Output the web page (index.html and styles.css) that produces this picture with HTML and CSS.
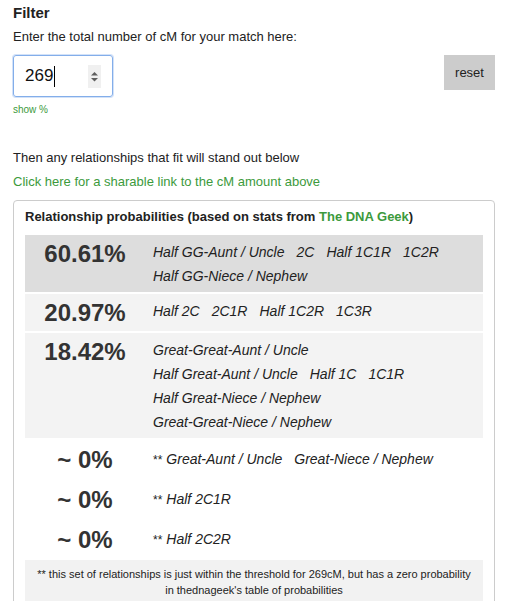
FILE: index.html
```html
<!DOCTYPE html>
<html lang="en">
<head>
  <meta charset="UTF-8">
  <meta name="viewport" content="width=device-width, initial-scale=1.0">
  <title>cM Filter</title>
  <link rel="stylesheet" href="styles.css">
</head>
<body>
<div class="page">
    <h2 class="filter-title">Filter</h2>
    <p class="intro">Enter the total number of cM for your match here:</p>

    <div class="input-row">
        <div class="cm-input">
            <span class="cm-value">269</span><span class="caret"></span>
            <svg class="spinner" width="13" height="23" viewBox="0 0 13 23">
                <rect width="13" height="23" fill="#f0f0f0"/>
                <path d="M3 10.5 L6.5 7 L10 10.5 Z" fill="#5f5f5f"/>
                <path d="M3 13 L6.5 16.5 L10 13 Z" fill="#5f5f5f"/>
            </svg>
        </div>
        <button class="reset">reset</button>
    </div>
    <a class="show-pct" href="#">show %</a>

    <p class="hint">Then any relationships that fit will stand out below</p>
    <a class="share-link" href="#">Click here for a sharable link to the cM amount above</a>

    <div class="panel">
        <div class="panel-title">Relationship probabilities (based on stats from <a href="#">The DNA Geek</a>)</div>

        <div class="rows">
            <div class="row top">
                <div class="pct">60.61%</div>
                <div class="rels">
                    <div><span>Half GG-Aunt / Uncle</span><span>2C</span><span>Half 1C1R</span><span>1C2R</span></div>
                    <div><span>Half GG-Niece / Nephew</span></div>
                </div>
            </div>
            <div class="row">
                <div class="pct">20.97%</div>
                <div class="rels">
                    <div><span>Half 2C</span><span>2C1R</span><span>Half 1C2R</span><span>1C3R</span></div>
                </div>
            </div>
            <div class="row">
                <div class="pct">18.42%</div>
                <div class="rels">
                    <div><span>Great-Great-Aunt / Uncle</span></div>
                    <div><span>Half Great-Aunt / Uncle</span><span>Half 1C</span><span>1C1R</span></div>
                    <div><span>Half Great-Niece / Nephew</span></div>
                    <div><span>Great-Great-Niece / Nephew</span></div>
                </div>
            </div>
            <div class="row zero">
                <div class="pct">~ 0%</div>
                <div class="rels">
                    <div><b class="stars">**</b><span>Great-Aunt / Uncle</span><span>Great-Niece / Nephew</span></div>
                </div>
            </div>
            <div class="row zero">
                <div class="pct">~ 0%</div>
                <div class="rels">
                    <div><b class="stars">**</b><span>Half 2C1R</span></div>
                </div>
            </div>
            <div class="row zero">
                <div class="pct">~ 0%</div>
                <div class="rels">
                    <div><b class="stars">**</b><span>Half 2C2R</span></div>
                </div>
            </div>
        </div>

        <div class="footnote">** this set of relationships is just within the threshold for 269cM, but has a zero probability in thednageek's table of probabilities</div>
    </div>
</div>
</body>
</html>
```

FILE: styles.css
```css
body {
  font-family: "Liberation Sans", Arial, sans-serif;
  margin: 0;
  padding: 0;
  background-color: #fff;
  color: #222;
}
.page {
  width: 482px;
  padding: 0 17px 0 13px;
}
.filter-title {
  font-size: 15px;
  line-height: 18px;
  margin: 4px 0 7px;
  color: #222;
}
.intro {
  font-size: 13px;
  line-height: 16px;
  margin: 0 0 10px;
}
.input-row {
  display: flex;
  justify-content: space-between;
  align-items: flex-start;
}
.cm-input {
  box-sizing: border-box;
  width: 100px;
  height: 42px;
  border: 1px solid #83aeea;
  border-radius: 3px;
  box-shadow: 0 0 0 1px #d3e2f8;
  display: flex;
  align-items: center;
  padding-left: 11px;
}
.cm-value {
  font-size: 17px;
  color: #111;
}
.caret {
  display: inline-block;
  width: 1px;
  height: 21px;
  background: #000;
  margin-left: 1px;
}
.spinner {
  margin-left: auto;
  margin-right: 11px;
}
.reset {
  width: 51px;
  height: 35px;
  background-color: #cccccc;
  color: #222;
  border: none;
  border-radius: 0;
  font-family: inherit;
  font-size: 13px;
  padding: 0;
}
.show-pct {
  display: block;
  font-size: 10px;
  line-height: 12px;
  margin-top: 7px;
  color: #3c9a3c;
  text-decoration: none;
}
.hint {
  font-size: 13px;
  line-height: 16px;
  margin: 34px 0 8px;
}
.share-link {
  display: block;
  font-size: 13px;
  line-height: 16px;
  color: #3c9a3c;
  text-decoration: none;
  margin-bottom: 10px;
}
.panel {
  border: 1px solid #cccccc;
  border-radius: 4px;
  padding: 8px 11px 0;
}
.panel-title {
  font-size: 13px;
  font-weight: bold;
  line-height: 16px;
  margin-bottom: 10px;
}
.panel-title a {
  color: #3c9a3c;
  text-decoration: none;
}
.rows {
  display: flex;
  flex-direction: column;
  gap: 2px;
}
.row {
  display: flex;
  padding: 5px 0 4px;
  background: #f3f3f3;
}
.row.top {
  background: #dddddd;
}
.row.zero {
  background: none;
  padding: 6px 0 4px;
}
.pct {
  width: 120px;
  flex-shrink: 0;
  text-align: center;
  font-size: 24px;
  font-weight: bold;
  line-height: 28px;
  color: #333;
}
.rels {
  padding-left: 8px;
  font-size: 14px;
  font-style: italic;
  line-height: 24px;
  color: #222;
}
.rels span {
  margin-right: 12px;
}
.zero .rels {
  padding-top: 1px;
}
.stars {
  font-style: normal;
  font-weight: normal;
  font-size: 12px;
  margin-right: 4px;
}
.footnote {
  margin-top: 2px;
  background: #f2f2f2;
  font-size: 11px;
  line-height: 16px;
  text-align: center;
  padding: 6px 8px;
  color: #222;
}
```
